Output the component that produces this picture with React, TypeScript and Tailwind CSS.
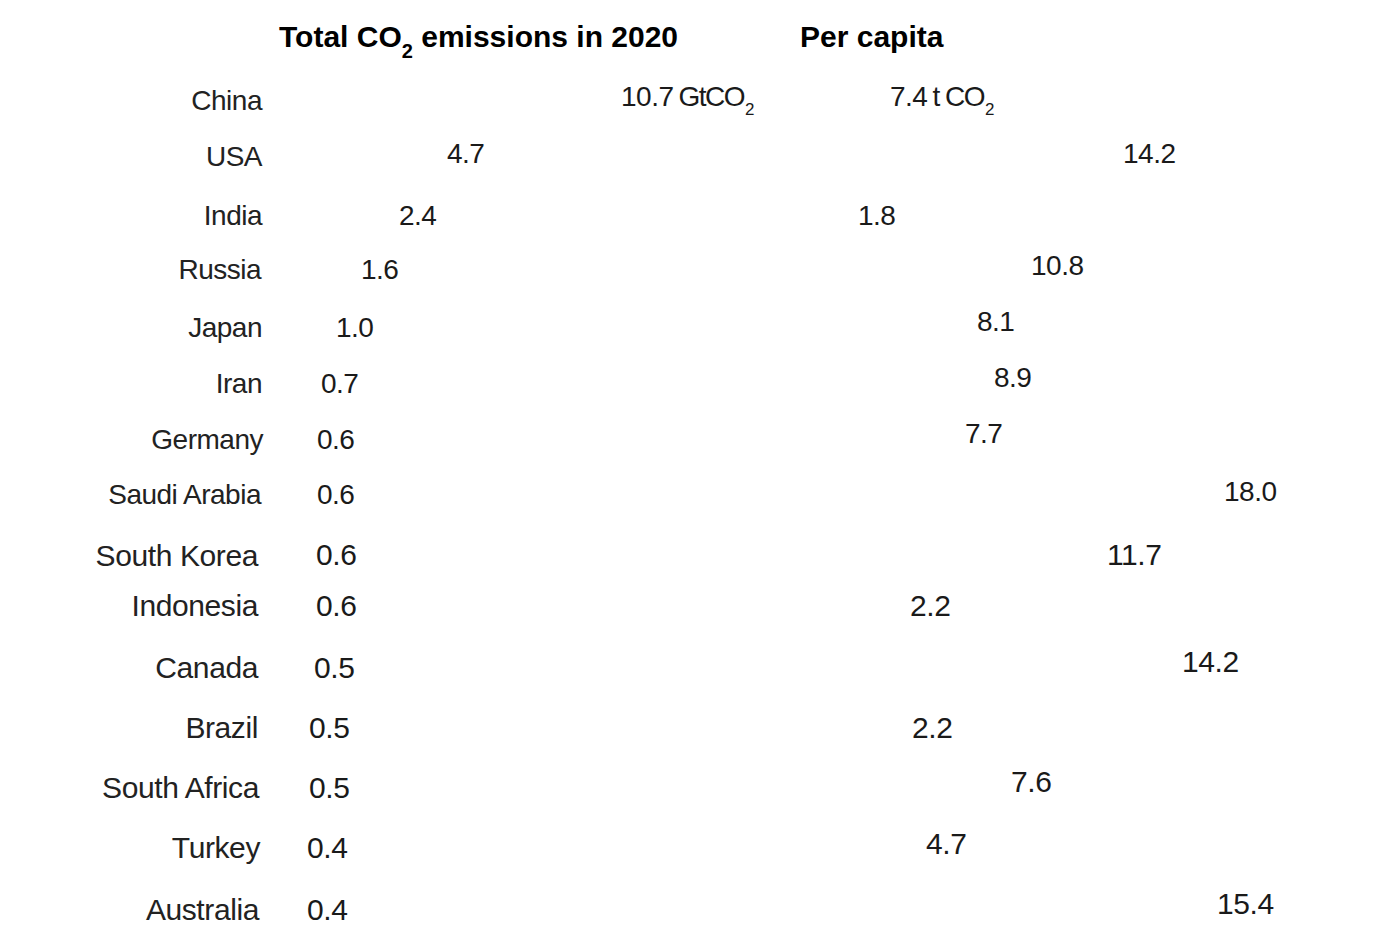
const rows = [
  { name: 'China', c: 101, lr: 262, tx: 621, t: '10.7', tu: 'GtCO', tdy: -4, px: 890, p: '7.4', pu: 't CO', pdy: -4 },
  { name: 'USA', c: 157, lr: 262, tx: 447, t: '4.7', tdy: -3, px: 1123, p: '14.2', pdy: -3 },
  { name: 'India', c: 216, lr: 262, tx: 399, t: '2.4', tdy: 0, px: 858, p: '1.8', pdy: 0 },
  { name: 'Russia', c: 270, lr: 261, tx: 361, t: '1.6', tdy: 0, px: 1031, p: '10.8', pdy: -4 },
  { name: 'Japan', c: 328, lr: 262, tx: 336, t: '1.0', tdy: 0, px: 977, p: '8.1', pdy: -6 },
  { name: 'Iran', c: 384, lr: 262, tx: 321, t: '0.7', tdy: 0, px: 994, p: '8.9', pdy: -6 },
  { name: 'Germany', c: 440, lr: 263, tx: 317, t: '0.6', tdy: 0, px: 965, p: '7.7', pdy: -6 },
  { name: 'Saudi Arabia', c: 495, lr: 261, tx: 317, t: '0.6', tdy: 0, px: 1224, p: '18.0', pdy: -3 },
  { name: 'South Korea', c: 556, lr: 258, tx: 316, t: '0.6', tdy: -1, px: 1107, p: '11.7', pdy: -1, big: true },
  { name: 'Indonesia', c: 606, lr: 258, tx: 316, t: '0.6', tdy: 0, px: 910, p: '2.2', pdy: 0, big: true },
  { name: 'Canada', c: 668, lr: 258, tx: 314, t: '0.5', tdy: 0, px: 1182, p: '14.2', pdy: -6, big: true },
  { name: 'Brazil', c: 728, lr: 258, tx: 309, t: '0.5', tdy: 0, px: 912, p: '2.2', pdy: 0, big: true },
  { name: 'South Africa', c: 788, lr: 259, tx: 309, t: '0.5', tdy: 0, px: 1011, p: '7.6', pdy: -6, big: true },
  { name: 'Turkey', c: 848, lr: 260, tx: 307, t: '0.4', tdy: 0, px: 926, p: '4.7', pdy: -4, big: true },
  { name: 'Australia', c: 910, lr: 259, tx: 307, t: '0.4', tdy: 0, px: 1217, p: '15.4', pdy: -6, big: true },
];

const LABEL_W = 263;
const PC_START = 800;
const ROW_H = 56;

function Value({ v, unit, dy }: { v: string; unit?: string; dy: number }) {
  return (
    <span className="whitespace-nowrap text-[#1a1a1a]" style={{ transform: `translateY(${dy}px)` }}>
      {v}
      {unit && (
        <span className="ml-[5px] tracking-[-1.5px]">
          {unit}
          <sub className="ml-[1px] text-[17px] tracking-normal align-[-5px]">2</sub>
        </span>
      )}
    </span>
  );
}

export default function App() {
  return (
    <div className="w-[1392px] h-[938px] overflow-hidden bg-white font-['Liberation_Sans',Arial,sans-serif] text-[#222]">
      <div className="flex h-[73px] items-center">
        <div className="w-[279px] shrink-0" />
        <h2 className="w-[521px] shrink-0 text-[30px] font-bold text-black">
          Total CO<sub className="text-[20px] align-[-6px]">2</sub> emissions in 2020
        </h2>
        <h2 className="text-[30px] font-bold text-black">Per capita</h2>
      </div>

      {rows.map((r, i) => {
        const gap = i === 0 ? 0 : r.c - rows[i - 1].c - ROW_H;
        return (
          <div
            key={r.name}
            className={
              r.big
                ? 'flex h-[56px] items-center text-[30px] leading-none tracking-[-0.4px]'
                : 'flex h-[56px] items-center text-[28px] leading-none tracking-[-0.5px]'
            }
            style={{ marginTop: gap }}
          >
            <div className="shrink-0 text-right" style={{ width: LABEL_W, paddingRight: LABEL_W - r.lr }}>
              {r.name}
            </div>
            <div className="flex shrink-0 items-center" style={{ width: PC_START - LABEL_W, paddingLeft: r.tx - LABEL_W }}>
              <Value v={r.t} unit={r.tu} dy={r.tdy} />
            </div>
            <div className="flex items-center" style={{ paddingLeft: r.px - PC_START }}>
              <Value v={r.p} unit={r.pu} dy={r.pdy} />
            </div>
          </div>
        );
      })}
    </div>
  );
}
